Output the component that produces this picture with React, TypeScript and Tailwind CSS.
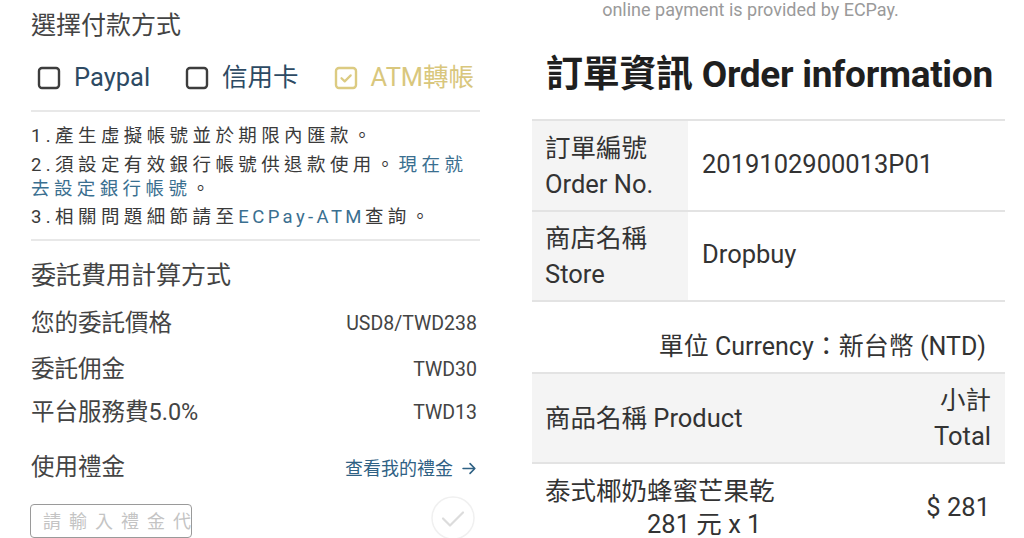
import React from "react";

const FONT = "font-['Roboto','Noto_Sans_CJK_TC',sans-serif]";

function Box({ checked, color }: { checked?: boolean; color: string }) {
  return (
    <svg width="24" height="24" viewBox="0 0 24 24" className="shrink-0">
      <rect x="2" y="2" width="20" height="20" rx="3" fill="none" stroke={color} strokeWidth="2.4" />
      {checked && <path d="M7.5 12.2l3.2 3.2 6-6" fill="none" stroke={color} strokeWidth="2.2" strokeLinecap="round" strokeLinejoin="round" />}
    </svg>
  );
}

const FEES = [
  { label: "您的委託價格", value: "USD8/TWD238", h: "h-[48px]" },
  { label: "委託佣金", value: "TWD30", h: "h-[44px]" },
  { label: "平台服務費5.0%", value: "TWD13", h: "h-[42px]" },
];

function PaymentPanel() {
  return (
    <div className="w-[512px] shrink-0 pl-[31px] pr-[32px] text-[#444]">
      {/* payment method */}
      <div className="h-[50px] pt-[11px] text-[25px] leading-[30px]">選擇付款方式</div>
      <div className="h-[60px] flex items-center text-[25.5px] pb-[5px]">
        <div className="flex items-center gap-[13px] ml-[6px] text-[#2d4a63]">
          <Box color="#3d3d3d" />
          <span>Paypal</span>
        </div>
        <div className="flex items-center gap-[13px] ml-[35px] text-[#2d4a63]">
          <Box color="#3d3d3d" />
          <span>信用卡</span>
        </div>
        <div className="flex items-center gap-[13px] ml-[35px] text-[#d9c77d]">
          <Box checked color="#dccb82" />
          <span>ATM轉帳</span>
        </div>
      </div>
      <div className="h-[2px] bg-[#e8e8e8]" />

      {/* notes */}
      <div className="pt-[12px] pb-[10px] text-[18.5px] tracking-[4.4px] leading-[24px] text-[#3a3a3a] whitespace-nowrap">
        <p>1.產生虛擬帳號並於期限內匯款。</p>
        <p className="mt-[5px]">
          2.須設定有效銀行帳號供退款使用。<span className="text-[#3a6f90]">現在就</span>
          <br />
          <span className="text-[#3a6f90]">去設定銀行帳號</span>。
        </p>
        <p className="mt-[4px]">
          3.相關問題細節請至<span className="text-[#3a6f90] tracking-[3.4px]">ECPay-ATM</span>查詢。
        </p>
      </div>
      <div className="h-[2px] bg-[#e8e8e8]" />

      {/* fee calculation */}
      <div className="h-[59px] pt-[20px] text-[25px] leading-[30px]">委託費用計算方式</div>
      {FEES.map((f) => (
        <div key={f.label} className={`${f.h} flex items-center justify-between`}>
          <span className="text-[23.5px]">{f.label}</span>
          <span className="text-[19.5px] pr-[3px]">{f.value}</span>
        </div>
      ))}
      <div className="h-[62px] flex items-center justify-between pt-[6px]">
        <span className="text-[23.5px]">使用禮金</span>
        <span className="text-[18px] text-[#2f6184] pr-[3px] flex items-center gap-[9px]">
          查看我的禮金
          <svg width="15" height="15" viewBox="0 0 14 14">
            <path d="M1 7h11M7.5 2.5L12 7l-4.5 4.5" fill="none" stroke="#2f6184" strokeWidth="1.5" strokeLinecap="round" strokeLinejoin="round" />
          </svg>
        </span>
      </div>
      <div className="flex items-start justify-between pt-[8px]">
        <div className="w-[162px] h-[34px] border-[1.5px] border-[#9a9a9a] rounded-[4px] pl-[12px] flex items-center text-[18px] tracking-[8px] text-[#c4c4c4] overflow-hidden whitespace-nowrap -ml-[1px]">
          請輸入禮金代
        </div>
        <svg width="46" height="46" viewBox="0 0 46 46" className="-mt-[9px] mr-[4px]">
          <circle cx="23" cy="23" r="21" fill="none" stroke="#f0f0f0" strokeWidth="1.5" />
          <path d="M13 23.5l7 7 13-13" fill="none" stroke="#dcdcdc" strokeWidth="2.2" strokeLinecap="round" strokeLinejoin="round" />
        </svg>
      </div>
    </div>
  );
}

function OrderPanel() {
  return (
    <div className="w-[512px] shrink-0 pl-[20px] pr-[19px] text-[#333]">
      <div className="h-[22px] -mt-[1px] text-center text-[18px] leading-[22px] text-[#9a9a9a] pr-[36px]">
        online payment is provided by ECPay.
      </div>
      <div className="h-[98px] flex items-center pl-[14px] pt-[9px] text-[37px] font-bold text-[#1f1f1f] tracking-[-0.3px]">
        訂單資訊 Order information
      </div>

      {/* order table */}
      <div className="border-t-2 border-[#e3e3e3] text-[25.5px] leading-[36px]">
        <div className="flex h-[91px] border-b-2 border-[#e3e3e3]">
          <div className="w-[156px] bg-[#f4f4f4] pl-[13px] flex flex-col justify-center">
            <span>訂單編號</span>
            <span>Order No.</span>
          </div>
          <div className="flex items-center pl-[14px] pb-[4px]">2019102900013P01</div>
        </div>
        <div className="flex h-[90px] border-b-2 border-[#e3e3e3]">
          <div className="w-[156px] bg-[#f4f4f4] pl-[13px] flex flex-col justify-center">
            <span>商店名稱</span>
            <span>Store</span>
          </div>
          <div className="flex items-center pl-[14px] pb-[4px]">Dropbuy</div>
        </div>
      </div>

      <div className="h-[70px] flex items-end justify-end pr-[19px] pb-[9px] text-[25px] leading-[32px]">
        單位 Currency：新台幣 (NTD)
      </div>

      <div className="border-t-2 border-[#e3e3e3] text-[25.5px] leading-[36px]">
        <div className="flex h-[90px] items-center justify-between bg-[#f4f4f4] border-b-2 border-[#e3e3e3] pl-[13px] pr-[14px]">
          <span>商品名稱 Product</span>
          <span className="flex flex-col items-end">
            <span>小計</span>
            <span>Total</span>
          </span>
        </div>
        <div className="flex items-start justify-between pl-[13px] pr-[15px] pt-[9px]">
          <div className="flex flex-col items-start">
            <span>泰式椰奶蜂蜜芒果乾</span>
            <span className="ml-[102px] -mt-[3px]">281 元 x 1</span>
          </div>
          <span className="pt-[16px]">$ 281</span>
        </div>
      </div>
    </div>
  );
}

export default function App() {
  return (
    <div className={`w-[1024px] h-[538px] overflow-hidden bg-white flex ${FONT}`}>
      <PaymentPanel />
      <OrderPanel />
    </div>
  );
}
